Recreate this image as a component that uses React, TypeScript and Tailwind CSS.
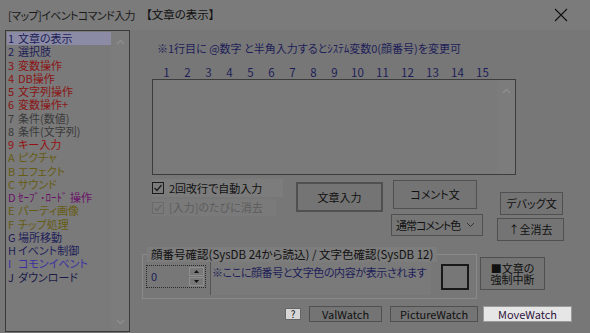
const items: [string, string, string][] = [
  ['1', '文章の表示', 'text-[#1e1e58]'],
  ['2', '選択肢', 'text-[#1e1e58]'],
  ['3', '変数操作', 'text-[#8a1414]'],
  ['4', 'DB操作', 'text-[#8a1414]'],
  ['5', '文字列操作', 'text-[#8a1414]'],
  ['6', '変数操作+', 'text-[#8a1414]'],
  ['7', '条件(数値)', 'text-[#3a3a3a]'],
  ['8', '条件(文字列)', 'text-[#3a3a3a]'],
  ['9', 'キー入力', 'text-[#961010]'],
  ['A', 'ピクチャ', 'text-[#665c12]'],
  ['B', 'エフェクト', 'text-[#665c12]'],
  ['C', 'サウンド', 'text-[#665c12]'],
  ['D', 'ｾｰﾌﾞ･ﾛｰﾄﾞ 操作', 'text-[#6a1068]'],
  ['E', 'パーティ画像', 'text-[#665c12]'],
  ['F', 'チップ処理', 'text-[#665c12]'],
  ['G', '場所移動', 'text-[#1e1e58]'],
  ['H', 'イベント制御', 'text-[#1e1e58]'],
  ['I', 'コモンイベント', 'text-[#3a30a0]'],
  ['J', 'ダウンロード', 'text-[#1a1a48]'],
];

const nums = ['1', '2', '3', '4', '5', '6', '7', '8', '9', '10', '11', '12', '13', '14', '15'];

const Chevron = ({ down }: { down?: boolean }) => (
  <svg width="9" height="6" viewBox="0 0 9 6" className={down ? 'rotate-180' : ''}>
    <polyline points="1,5 4.5,1.5 8,5" fill="none" stroke="#8e8e8e" strokeWidth="1.4" />
  </svg>
);

const Check = ({ color }: { color: string }) => (
  <svg width="10" height="10" viewBox="0 0 10 10">
    <polyline points="1.5,5 4,7.5 8.5,2" fill="none" stroke={color} strokeWidth="1.2" />
  </svg>
);

const btn = 'flex items-center justify-center border border-[#505050] bg-[#747474] text-[#111] leading-none whitespace-nowrap';

const App = () => {
  return (
    <div className="w-[590px] h-[333px] overflow-hidden bg-[#777777] flex flex-col text-[11px] text-[#111] font-['Noto_Sans_CJK_JP','Liberation_Sans',sans-serif] [font-feature-settings:'palt']">
      <div className="h-[30px] shrink-0 flex items-center bg-[#7b7b7b]">
        <div className="w-[146px] pl-[8px] text-[11px] tracking-[-0.6px] text-[#1a1a1a] whitespace-nowrap">[マップ]イベントコマンド入力</div>
        <div className="text-[11.5px] whitespace-nowrap">【文章の表示】</div>
        <svg width="14" height="14" viewBox="0 0 14 14" className="ml-auto mr-[22px]">
          <path d="M1 1 L13 13 M13 1 L1 13" stroke="#111" strokeWidth="1.1" />
        </svg>
      </div>

      <div className="flex flex-1">
        <div className="ml-[5px] w-[125px] h-[302px] border border-[#3a3a3a] bg-[#7a7a7a] flex">
          <div className="flex-1 pt-[1px] pl-[1px]">
            {items.map(([n, t, c], i) => (
              <div
                key={n}
                className={`h-[13.25px] leading-[13.25px] pl-[1px] flex whitespace-nowrap ${c} ${i === 0 ? 'bg-[#8b8ba6]' : ''}`}
              >
                <span className="w-[10px]">{n}</span>
                <span>{t}</span>
              </div>
            ))}
          </div>
          <div className="w-[18px] bg-[#7c7c7c] flex flex-col items-center justify-between pt-[8px] pb-[6px]">
            <Chevron />
            <Chevron down />
          </div>
        </div>

        <div className="flex-1 flex flex-col">
          <div className="ml-[27px] mt-[11px] h-[14px] leading-[14px] text-[#1e1e58] whitespace-nowrap">
            ※1行目に @数字 と半角入力するとｼｽﾃﾑ変数0(顔番号)を変更可
          </div>
          <div className="ml-[26px] mt-[11px] h-[12px] leading-[12px] flex text-[#1e1e58] text-[11.5px]">
            {nums.map((n) => (
              <span key={n} className={`text-center ${n.length > 1 ? 'w-[25px]' : 'w-[21px]'}`}>{n}</span>
            ))}
          </div>
          <div className="ml-[22px] mt-[1px] w-[364px] h-[96px] border border-[#3c3c3c] bg-[#7a7a7a] flex justify-end">
            <div className="w-[18px] bg-[#7c7c7c] flex justify-center pt-[8px]">
              <Chevron />
            </div>
          </div>

          <div className="ml-[22px] flex items-start">
            <div className="mt-[4px] w-[131px]">
              <div className="h-[18px] w-[131px] bg-[#7c7c7c] flex items-center">
                <div className="w-[12px] h-[12px] border border-[#1a1a1a] flex items-center justify-center">
                  <Check color="#1a1a1a" />
                </div>
                <span className="ml-[5px] leading-none whitespace-nowrap">2回改行で自動入力</span>
              </div>
              <div className="mt-[2px] h-[17px] w-[124px] bg-[#7a7a7a] flex items-center">
                <div className="w-[12px] h-[12px] border border-[#6a6a6a] flex items-center justify-center">
                  <Check color="#666" />
                </div>
                <span className="ml-[5px] leading-none text-[#5c5c5c] whitespace-nowrap">[入力]のたびに消去</span>
              </div>
            </div>
            <div className={`${btn} ml-[13px] mt-[7px] w-[87px] h-[30px] border-2 border-[#1b4a80] bg-[#777]`}>文章入力</div>
            <div className="ml-[8px] w-[92px]">
              <div className={`${btn} ml-[2px] mt-[5px] w-[84px] h-[29px]`}>コメント文</div>
              <div className="mt-[5px] w-[92px] h-[22px] border border-[#505050] bg-[#767676] flex items-center justify-between pl-[4px] pr-[7px] leading-none whitespace-nowrap">
                <span className="tracking-[-1px]">通常コメント色</span>
                <svg width="9" height="6" viewBox="0 0 9 6">
                  <polyline points="1,1 4.5,4.5 8,1" fill="none" stroke="#333" strokeWidth="1" />
                </svg>
              </div>
            </div>
            <div className="ml-[14px]">
              <div className={`${btn} ml-[3px] mt-[17px] w-[63px] h-[23px]`}>デバッグ文</div>
              <div className={`${btn} mt-[3px] w-[67px] h-[23px]`}>↑全消去</div>
            </div>
          </div>

          <div className="ml-[12px] flex items-start">
            <div className="relative mt-[13px] w-[335px] h-[45px] border border-[#8a8a8a] flex items-start">
              <div className="absolute left-[4px] top-[-8px] h-[15px] leading-[15px] px-[4px] bg-[#7d7d7d] text-[11.5px] whitespace-nowrap">
                顔番号確認(SysDB 24から読込) / 文字色確認(SysDB 12)
              </div>
              <div className="ml-[3px] mt-[10px] w-[60px] h-[23px] border border-dotted border-[#2a2a2a] flex items-center justify-between pl-[4px] pr-[1px]">
                <span className="text-[#1e1e58] leading-none">0</span>
                <div className="flex flex-col gap-[1px]">
                  <div className="w-[15px] h-[9px] border border-[#8e8e8e] bg-[#787878] flex items-center justify-center">
                    <svg width="5" height="3" viewBox="0 0 5 3"><polygon points="0,3 2.5,0 5,3" fill="#111" /></svg>
                  </div>
                  <div className="w-[15px] h-[9px] border border-[#8e8e8e] bg-[#787878] flex items-center justify-center">
                    <svg width="5" height="3" viewBox="0 0 5 3"><polygon points="0,0 2.5,3 5,0" fill="#111" /></svg>
                  </div>
                </div>
              </div>
              <div className="ml-[4px] mt-[2px] w-[221px] h-[38px] border-l border-[#555] bg-[#7a7a7a] pt-[8px] pl-[1px] leading-[14px] tracking-[-0.4px] text-[#1e1e58] whitespace-nowrap">
                ※ここに顔番号と文字色の内容が表示されます
              </div>
              <div className="ml-[10px] mt-[9px] w-[28px] h-[26px] border-2 border-[#181818]"></div>
            </div>
            <div className={`${btn} ml-[3px] mt-[16px] w-[65px] h-[33px] flex-col leading-[16px]`}>
              <span>■文章の</span>
              <span>強制中断</span>
            </div>
          </div>

          <div className="ml-[155px] mt-[7px] flex items-start leading-none">
            <div className="mt-[2px] w-[16px] h-[12px] border border-[#666] bg-[#d6d6d6] flex items-center justify-center text-[10px]">?</div>
            <div className={`${btn} ml-[8px] w-[73px] h-[16px]`}>ValWatch</div>
            <div className={`${btn} ml-[8px] w-[88px] h-[16px] text-[#2e1428]`}>PictureWatch</div>
            <div className="ml-[5px] w-[89px] h-[16px] border border-[#9a9a9a] bg-[#e6e6e6] flex items-center justify-center text-[#2e1440]">MoveWatch</div>
          </div>
        </div>
      </div>
    </div>
  );
};

export default App;
